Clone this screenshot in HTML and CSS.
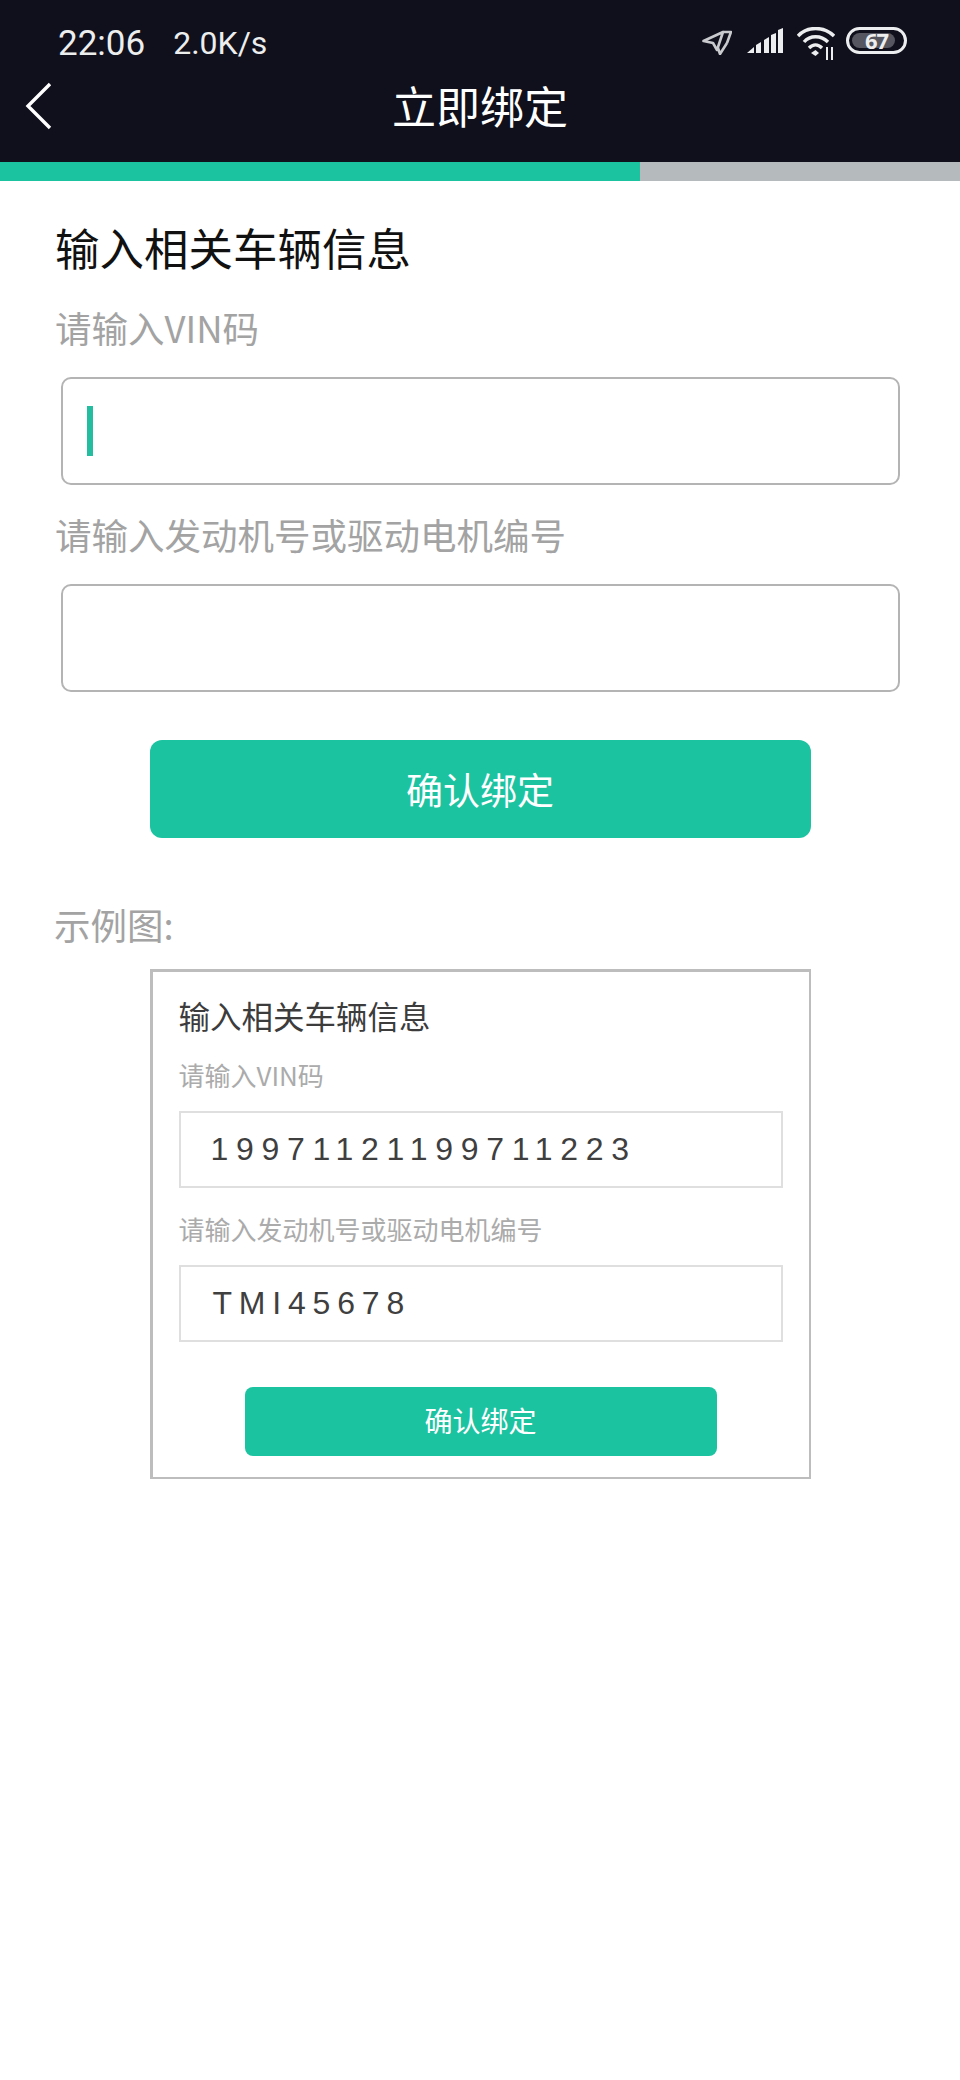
FILE: index.html
```html
<!DOCTYPE html>
<html lang="zh-CN">
<head>
    <meta charset="UTF-8">
    <meta name="viewport" content="width=device-width, initial-scale=1.0">
    <title>立即绑定</title>
    <link rel="stylesheet" href="styles.css">
</head>
<body>
    <header class="top">
        <div class="status">
            <span class="time">22:06</span>
            <span class="speed">2.0K/s</span>
            <div class="status-icons">
                <svg class="ic-loc" width="30" height="26" viewBox="0 0 30 26" fill="none" stroke="#c9cacd" stroke-width="2.6" stroke-linejoin="round">
                    <path d="M1.500 12 L21 3 L15 21 L11 14 Z"/>
                    <path d="M21 3 L29 3 L25 14 M25 14 L18 25 L16 19"/>
                </svg>
                <svg class="ic-signal" width="37" height="27" viewBox="0 0 37 27" fill="#ecedee">
                    <path d="M0 26 L7 20 V26 Z"/>
                    <path d="M9 18 L14 15 V26 H9 Z"/>
                    <path d="M17 13 L22 10 V26 H17 Z"/>
                    <path d="M24 8 L29 6 V26 H24 Z"/>
                    <path d="M31 3 L36 1 V26 H31 Z"/>
                </svg>
                <svg class="ic-wifi" width="38" height="34" viewBox="0 0 38 34" fill="none" stroke="#ecedee" stroke-width="3.4">
                    <path d="M1 9 C10 -1 27 -1 37 9"/>
                    <path d="M7 15 C13 8 24 8 31 15"/>
                    <path d="M12 21 C16 17 21 17 25 21"/>
                    <path d="M14 26 L18.500 23 L22 26 L18.500 29 Z" fill="#ecedee" stroke="none"/>
                    <path d="M30 20 V33 M35 20 V33" stroke-width="2"/>
                </svg>
                <div class="battery">
                    <span class="battery-level"></span>
                    <span class="battery-num">67</span>
                </div>
            </div>
        </div>
        <div class="nav">
            <svg class="back" width="28" height="48" viewBox="0 0 28 48" fill="none" stroke="#fff" stroke-width="3.400">
                <path d="M25 2 L3 24 L25 46"/>
            </svg>
            <h1 class="nav-title">立即绑定</h1>
        </div>
    </header>
    <div class="progress"><div class="progress-done"></div></div>

    <main class="page">
        <h2 class="title">输入相关车辆信息</h2>
        <div class="label label-first">请输入VIN码</div>
        <div class="field"><span class="caret"></span></div>
        <div class="label">请输入发动机号或驱动电机编号</div>
        <div class="field"></div>
        <button class="btn">确认绑定</button>

        <div class="label example-label">示例图:</div>
        <div class="example">
            <div class="ex-title">输入相关车辆信息</div>
            <div class="ex-label ex-label-first">请输入VIN码</div>
            <div class="ex-field">19971121199711223</div>
            <div class="ex-label">请输入发动机号或驱动电机编号</div>
            <div class="ex-field ex-field-short">TMI45678</div>
            <div class="ex-btn">确认绑定</div>
        </div>
    </main>
</body>
</html>
```
FILE: styles.css
```css
* {
    box-sizing: border-box;
}

body {
    margin: 0;
    background-color: #fff;
    font-family: "Noto Sans CJK SC", "Noto Sans", sans-serif;
}

/* Dark header with status bar and nav */
.top {
    height: 162px;
    background-color: #0f101c;
    color: #fff;
}

.status {
    display: flex;
    align-items: center;
    height: 64px;
    padding: 22px 53px 0 58px;
    font-family: Roboto, sans-serif;
    font-size: 35px;
    color: #eceded;
}

.speed {
    margin-left: 28px;
    font-size: 32px;
}

.status-icons {
    display: flex;
    align-items: flex-start;
    height: 36px;
    margin-left: auto;
    margin-top: 4px;
}

.ic-loc {
    margin-top: 2px;
    margin-right: 15px;
}

.ic-signal {
    margin-right: 13px;
}

.ic-wifi {
    margin-right: 11px;
}

.battery {
    position: relative;
    width: 61px;
    height: 27px;
    border: 3px solid #ecedee;
    border-radius: 14px;
    padding: 3px;
}

.battery-level {
    display: block;
    width: 88%;
    height: 100%;
    background-color: #55565f;
    border-radius: 8px;
}

.battery-num {
    position: absolute;
    top: 0;
    left: 16px;
    font-family: "Open Sans", sans-serif;
    font-size: 22px;
    font-weight: 700;
    letter-spacing: -1px;
    line-height: 21px;
    color: #eee;
}

.nav {
    position: relative;
    height: 98px;
    display: flex;
    align-items: center;
    justify-content: center;
}

.back {
    position: absolute;
    left: 25px;
    top: 18px;
}

.nav-title {
    margin: 0;
    font-size: 44px;
    font-weight: 400;
    line-height: 60px;
    margin-top: -16px;
}

.progress {
    height: 19px;
    background-color: #b5bbbd;
}

.progress-done {
    width: 640px;
    height: 100%;
    background-color: #1cc3a1;
}

/* Form */
.page {
    padding: 42px 56px 0;
}

.title {
    margin: 0 0 0 -1px;
    font-size: 44.500px;
    font-weight: 400;
    line-height: 48px;
    color: #111;
}

.label {
    margin-top: 26px;
    margin-left: -1px;
    font-size: 36.500px;
    line-height: 48px;
    color: #a3a3a3;
}

.label-first {
    margin-top: 33px;
}

.field {
    display: flex;
    align-items: center;
    width: 839px;
    height: 108px;
    margin: 25px 0 0 5px;
    padding-left: 24px;
    border: 2px solid #b4b4b4;
    border-radius: 10px;
}

.caret {
    width: 6px;
    height: 50px;
    background-color: #25bd9f;
}

.btn {
    display: block;
    width: 661px;
    height: 98px;
    margin: 48px auto 0;
    border: none;
    border-radius: 12px;
    background-color: #1cc3a1;
    color: #fff;
    font-family: inherit;
    font-size: 37px;
}

.example-label {
    margin-top: 63px;
    margin-left: -2px;
}

/* Sample picture, a smaller copy of the form */
.example {
    width: 661px;
    height: 510px;
    margin: 20px auto 0;
    padding: 23px 26px 0;
    border: 3px solid #bdbdbd;
    border-width: 3px 2px 2px 3px;
}

.ex-title {
    font-size: 31.500px;
    line-height: 40px;
    color: #3c3c3c;
}

.ex-label {
    margin-top: 25px;
    font-size: 26px;
    line-height: 32px;
    color: #ababab;
}

.ex-label-first {
    margin-top: 24px;
}

.ex-field {
    display: flex;
    align-items: center;
    width: 604px;
    height: 77px;
    margin-top: 20px;
    padding-left: 30px;
    border: 2px solid #dfdfdf;
    font-family: "Liberation Sans", sans-serif;
    font-size: 32px;
    letter-spacing: 7.700px;
    color: #3f3f3f;
}

.ex-field-short {
    padding-left: 32px;
    letter-spacing: 6.800px;
}

.ex-btn {
    width: 472px;
    height: 69px;
    margin: 45px 0 0 66px;
    border-radius: 8px;
    background-color: #1cc3a1;
    color: #fff;
    font-size: 28px;
    line-height: 66px;
    text-align: center;
}
```
